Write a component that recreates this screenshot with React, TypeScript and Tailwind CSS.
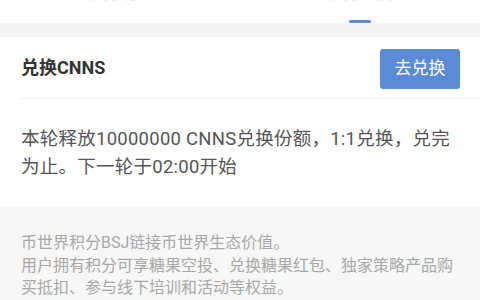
export default function App() {
  return (
    <div className="w-[480px] h-[300px] overflow-hidden bg-white font-['Roboto','Noto_Sans_CJK_SC',sans-serif]">
      {/* tabs, scrolled so only their lower edge shows */}
      <div className="grid grid-cols-2 h-[23px] overflow-hidden bg-white">
        <div className="flex flex-col items-center h-full">
          <span className="-mt-[17px] text-[16px] leading-[22px] text-[#e6e6e6]">积分明细</span>
        </div>
        <div className="flex flex-col items-center h-full">
          <span className="-mt-[17px] text-[16px] leading-[22px] text-[#e6e6e6]">积分兑换</span>
          <span className="mt-auto mb-[0.5px] w-[22px] h-[3px] rounded-full bg-[#5b8ad6]" />
        </div>
      </div>
      <div className="h-[14px] bg-[#f5f5f5]" />

      {/* header */}
      <div className="flex items-center justify-between pl-[21px] pr-[20px] pt-[12px] pb-[9px]">
        <span className="-mt-[4px] text-[18px] font-bold text-[#333]">兑换CNNS</span>
        <button className="w-[80px] h-[40px] rounded-[3px] bg-[#5b8ad6] text-white text-[17px]">
          去兑换
        </button>
      </div>
      <div className="ml-[21px] h-px bg-[#eeeeee]" />

      <p className="pl-[21px] pr-[4px] pt-[26px] pb-[26px] text-[18.5px] tracking-[0.25px] leading-[28px] text-[#555]">
        本轮释放10000000 CNNS兑换份额，1:1兑换，兑完
        <br />
        为止。下一轮于02:00开始
      </p>

      <div className="bg-[#f7f7f7] pl-[21px] pr-[19px] pt-[25px] pb-[20px] text-[16px] leading-[22.5px] text-[#a8a8a8]">
        <p>币世界积分BSJ链接币世界生态价值。</p>
        <p>用户拥有积分可享糖果空投、兑换糖果红包、独家策略产品购买抵扣、参与线下培训和活动等权益。</p>
      </div>
    </div>
  );
}
